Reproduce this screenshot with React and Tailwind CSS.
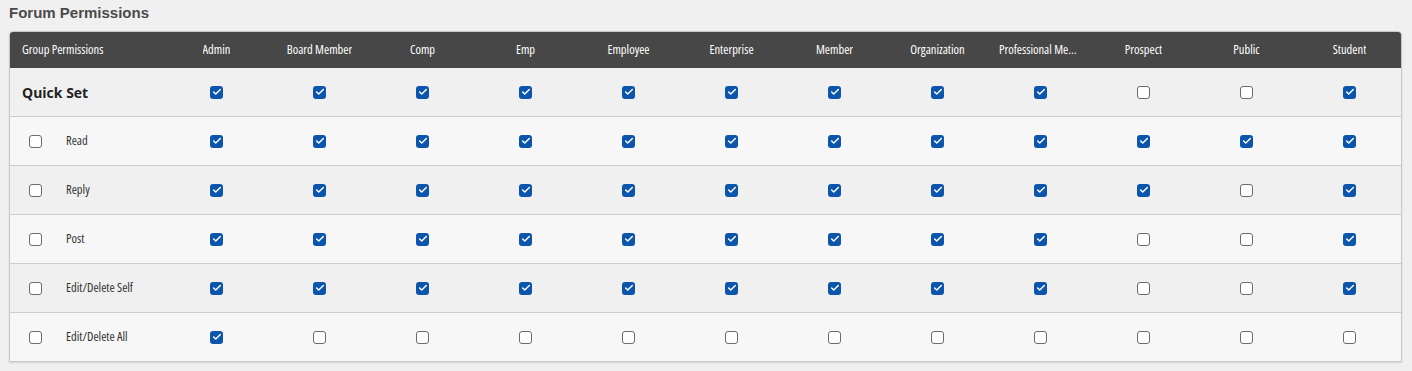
import { Check } from "lucide-react"

const groups = [
  "Admin",
  "Board Member",
  "Comp",
  "Emp",
  "Employee",
  "Enterprise",
  "Member",
  "Organization",
  "Professional Member",
  "Prospect",
  "Public",
  "Student",
]

const quickSet = [1, 1, 1, 1, 1, 1, 1, 1, 1, 0, 0, 1]

const rows = [
  { label: "Read", values: [1, 1, 1, 1, 1, 1, 1, 1, 1, 1, 1, 1] },
  { label: "Reply", values: [1, 1, 1, 1, 1, 1, 1, 1, 1, 1, 0, 1] },
  { label: "Post", values: [1, 1, 1, 1, 1, 1, 1, 1, 1, 0, 0, 1] },
  { label: "Edit/Delete Self", values: [1, 1, 1, 1, 1, 1, 1, 1, 1, 0, 0, 1] },
  { label: "Edit/Delete All", values: [1, 0, 0, 0, 0, 0, 0, 0, 0, 0, 0, 0] },
]

const Box = ({ checked }) =>
  checked ? (
    <span className="w-[13px] h-[13px] rounded-[3px] bg-[#0b55ad] flex items-center justify-center">
      <Check className="w-[10px] h-[10px] text-white" strokeWidth={3.5} />
    </span>
  ) : (
    <span className="w-[13px] h-[13px] rounded-[3px] bg-white border border-[#6b6b6b]" />
  )

const App = () => {
  return (
    <div className="min-h-[371px] bg-[#f0f0f0] pl-[9px] pr-[10px] font-['Open_Sans',sans-serif]">
      <h2 className="h-[31px] pt-[2px] text-[15px] font-bold text-[#4a4a4a] font-['Liberation_Sans',Arial,sans-serif]">
        Forum Permissions
      </h2>

      <div className="border border-[#c9c9c9] rounded-t-[4px] overflow-hidden shadow-[0_1px_2px_rgba(0,0,0,0.12)]">
        {/* Header */}
        <div className="grid grid-cols-[155px_repeat(12,1fr)] h-[36px] bg-[#474747] text-white text-[12.5px] [font-stretch:78%]">
          <div className="flex items-center pl-[12px]">Group Permissions</div>
          {groups.map((g) => (
            <div key={g} className="flex items-center justify-center px-[10px] min-w-0">
              <span className="truncate">{g}</span>
            </div>
          ))}
        </div>

        {/* Quick Set */}
        <div className="grid grid-cols-[155px_repeat(12,1fr)] h-[48px] bg-[#f0f0f0]">
          <div className="flex items-center pl-[12px] text-[14px] font-bold text-[#222]">Quick Set</div>
          {quickSet.map((v, i) => (
            <div key={i} className="flex items-center justify-center">
              <Box checked={v} />
            </div>
          ))}
        </div>

        {rows.map((row, r) => (
          <div
            key={row.label}
            className={`grid grid-cols-[155px_repeat(12,1fr)] h-[49px] border-t border-[#cdcdcd] ${
              r % 2 === 0 ? "bg-[#f7f7f7]" : "bg-[#f0f0f0]"
            }`}
          >
            <div className="flex items-center pl-[19px]">
              <Box checked={0} />
              <span className="ml-[24px] text-[12.5px] text-[#333] [font-stretch:78%]">{row.label}</span>
            </div>
            {row.values.map((v, i) => (
              <div key={i} className="flex items-center justify-center">
                <Box checked={v} />
              </div>
            ))}
          </div>
        ))}
      </div>
    </div>
  )
}

export default App
